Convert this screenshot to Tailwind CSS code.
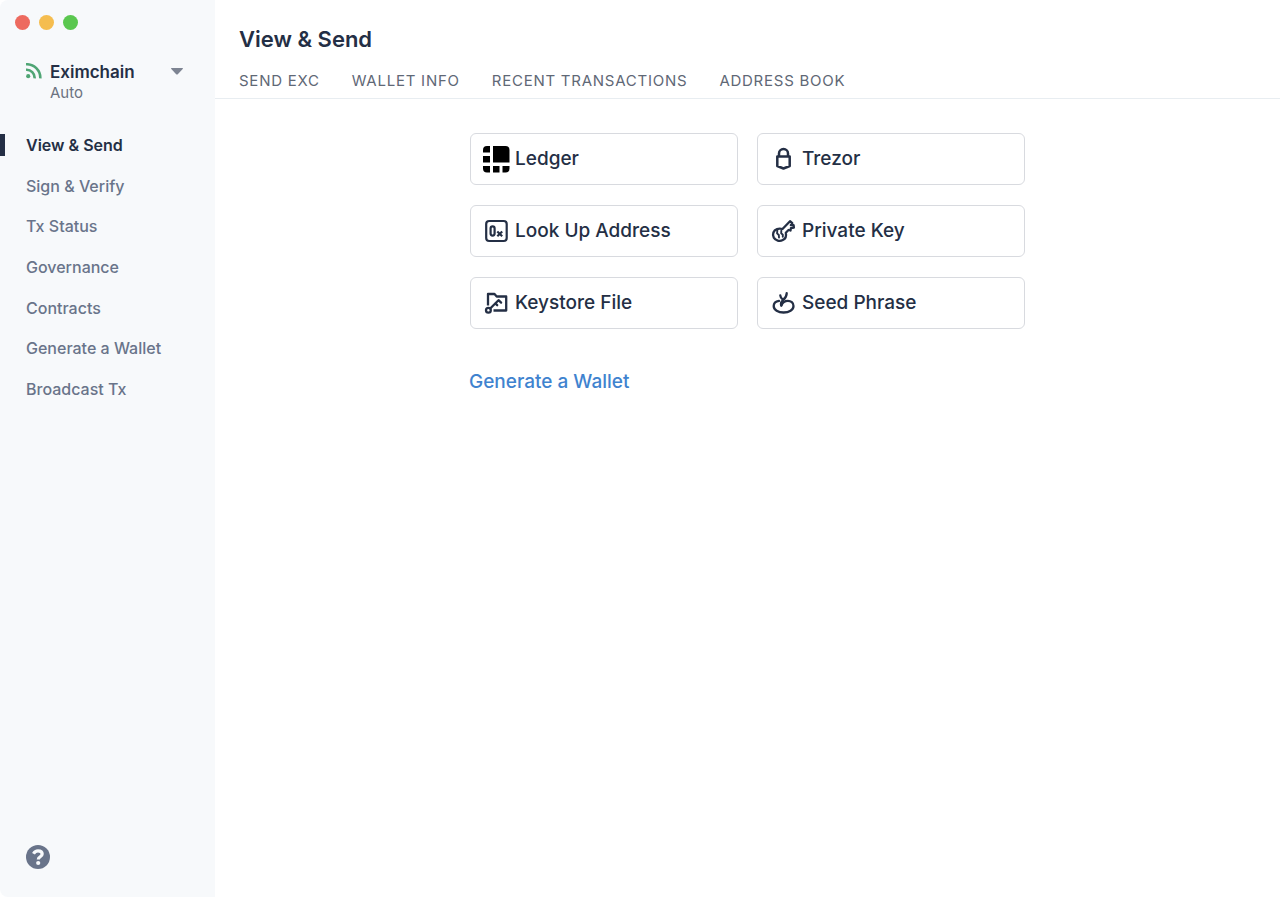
<!DOCTYPE html>
<html lang="en">
<head>
<meta charset="utf-8">
<meta name="viewport" content="width=device-width, initial-scale=1">
<title>View &amp; Send</title>
<script src="https://cdn.jsdelivr.net/npm/@tailwindcss/browser@4"></script>
</head>
<body class="flex min-h-screen bg-white font-['Inter',sans-serif] text-[#242f45]">
<aside class="flex w-[215px] shrink-0 flex-col rounded-l-lg bg-[#f7f9fb]">
  <div class="flex gap-[9px] pt-[15px] pl-[15px]">
    <button aria-label="Close" class="size-[15px] rounded-full bg-[#ed6a5f]"></button>
    <button aria-label="Minimize" class="size-[15px] rounded-full bg-[#f5bd4f]"></button>
    <button aria-label="Zoom" class="size-[15px] rounded-full bg-[#5ac74f]"></button>
  </div>
  <button class="mt-[30px] flex items-start pr-8 pl-[26px] text-left">
    <svg class="mt-[3px] size-4 shrink-0" viewBox="0 0 16 16" fill="none" stroke="#4fa574" stroke-width="2.6" aria-hidden="true"><circle cx="2.2" cy="13.2" r="2.1" fill="#4fa574" stroke="none"/><path d="M0 6.800A8 8 0 0 1 8.600 15.400M0 1.300A13.500 13.500 0 0 1 14.300 15.400"/></svg>
    <span class="ml-2 grow">
      <span class="block text-[17px] leading-6 font-semibold">Eximchain</span>
      <span class="block text-[15px] leading-[18px] text-[#6b7280]">Auto</span>
    </span>
    <svg class="mt-2 h-[7px] w-3" viewBox="0 0 12 7" aria-hidden="true"><path d="M.5 0h11q.8.3.2 1L6.8 6.2q-.8.7-1.6 0L.3 1q-.6-.7.2-1Z" fill="#7d8492"/></svg>
  </button>
  <nav class="mt-[32px] flex h-[266px] flex-col justify-between text-base leading-[22px] font-medium text-[#69748a]">
    <a href="#" aria-current="page" class="border-l-[5px] border-[#242f45] pl-[21px] font-semibold text-[#242f45]">View &amp; Send</a>
    <a href="#" class="pl-[26px]">Sign &amp; Verify</a>
    <a href="#" class="pl-[26px]">Tx Status</a>
    <a href="#" class="pl-[26px]">Governance</a>
    <a href="#" class="pl-[26px]">Contracts</a>
    <a href="#" class="pl-[26px]">Generate a Wallet</a>
    <a href="#" class="pl-[26px]">Broadcast Tx</a>
  </nav>
  <button aria-label="Help" class="mt-auto mb-7 ml-[26px] size-6">
    <svg viewBox="0 0 24 24" class="size-6" aria-hidden="true"><circle cx="12" cy="12" r="12" fill="#69748a"/><path d="M7.500 8.800C8.600 6.800 10.100 5.900 12 5.900c2.400 0 4.200 1.200 4.200 3.200 0 2.800-3.900 2.500-3.900 5.300" fill="none" stroke="#f7f9fb" stroke-width="3.200"/><circle cx="12.200" cy="18" r="2.100" fill="#f7f9fb"/></svg>
  </button>
</aside>
<main class="min-w-0 grow">
  <header class="border-b border-[#e8edf1] px-6 pt-6">
    <h1 class="text-[22px] leading-[30px] font-semibold">View &amp; Send</h1>
    <nav class="mt-4 flex gap-8 pb-[6px] text-[15px] leading-[22px] tracking-wider text-[#5f6876] uppercase">
      <a href="#">Send EXC</a>
      <a href="#">Wallet Info</a>
      <a href="#">Recent Transactions</a>
      <a href="#">Address Book</a>
    </nav>
  </header>
  <section class="mx-auto max-w-[555px] pt-[34px]">
    <div class="grid grid-cols-2 gap-x-[19px] gap-y-5 text-[19px] font-medium">
      <button class="flex h-[52px] items-center gap-[5px] rounded-md border border-[#d8dadf] pt-px pl-[11px]">
        <svg class="-mt-px size-7" viewBox="0 0 28 28" aria-hidden="true"><path d="M11 1H23.500Q27.500 1 27.500 5V17.500H11ZM5 1H8V7.500H1V5Q1 1 5 1ZM1 11H8V17.500H1ZM1 21H8V27.500H5Q1 27.500 1 23.500ZM11 21H17.500V27.500H11ZM20.500 21H27.500V23.500Q27.500 27.500 23.500 27.500H20.500Z"/></svg>Ledger
      </button>
      <button class="flex h-[52px] items-center gap-[5px] rounded-md border border-[#d8dadf] pt-px pl-[11px]">
        <svg class="-mt-px size-7" viewBox="0 0 28 28" fill="none" stroke="#242f45" stroke-width="2.500" stroke-linejoin="round" aria-hidden="true"><path d="M10 11V8.500a4.500 4.500 0 0 1 9 0V11M8.300 11.500h12.400v9.500L14.500 23.500 8.300 21Z"/></svg>Trezor
      </button>
      <button class="flex h-[52px] items-center gap-[5px] rounded-md border border-[#d8dadf] pt-px pl-[11px]">
        <svg class="-mt-px size-7" viewBox="0 0 28 28" fill="none" stroke="#242f45" stroke-width="2.200" aria-hidden="true"><rect x="4.200" y="4" width="20.500" height="20" rx="3"/><rect x="8.600" y="9.400" width="4" height="9.200" rx="2"/><path d="m15.300 14.500 4.900 4.700m0-4.700-4.900 4.700"/></svg>Look Up Address
      </button>
      <button class="flex h-[52px] items-center gap-[5px] rounded-md border border-[#d8dadf] pt-px pl-[11px]">
        <svg class="-mt-px size-7" viewBox="0 0 28 28" fill="none" stroke="#242f45" stroke-width="2.300" stroke-linecap="round" stroke-linejoin="round" aria-hidden="true"><path d="M13.500 12 21 4.200l2.300 1.900-1.500 2 2.800 0 .3 2.600-3 .5-.4 2.300-2-.5-2.700 2.700c.7 3-.3 6-3 7.400-3.200 1.600-7.300.5-9-2.500-1.800-3.400-.3-7.300 3.200-8.500 1.800-.6 3.700-.5 5.500-.1Z"/><path d="m8.300 13.300-.2 3 1.700 1.700.2 2.500M12.300 13.800l-.1 2.500 1.600 1.400v2" stroke-width="1.900"/></svg>Private Key
      </button>
      <button class="flex h-[52px] items-center gap-[5px] rounded-md border border-[#d8dadf] pt-px pl-[11px]">
        <svg class="-mt-px size-7" viewBox="0 0 28 28" fill="none" stroke="#242f45" stroke-width="2.300" stroke-linejoin="round" aria-hidden="true"><path d="M6 16.500V5h6.500l2.200 2.500h9.500V21.500H11.500"/><circle cx="6.400" cy="21.300" r="2.400"/><path d="m8.200 19.500 8.300-8.300 2.600 2.400M13.300 14.400l1.900 1.800" stroke-linecap="round"/></svg>Keystore File
      </button>
      <button class="flex h-[52px] items-center gap-[5px] rounded-md border border-[#d8dadf] pt-px pl-[11px]">
        <svg class="-mt-px size-7" viewBox="0 0 28 28" fill="none" stroke="#242f45" stroke-width="2.300" stroke-linecap="round" stroke-linejoin="round" aria-hidden="true"><path d="M10 11.800C6.700 12.300 4.700 14.100 4.700 17c0 3.900 4.500 6.500 9.900 6.500s9.900-2.600 9.900-6.500c0-3.300-2.600-5.200-5.600-5.200-3.400 0-5.400 1.600-6.600 4.700"/><path d="M12.300 16.500c-1-2.200 0-3.700 1.700-5.300 2.200-2 3.800-3.700 3.700-7M11.300 6.500c.1 1.800.8 3 2.700 4.300"/></svg>Seed Phrase
      </button>
    </div>
    <a href="#" class="mt-[39px] -ml-px inline-block text-[19px] leading-7 font-medium text-[#3f83cf]">Generate a Wallet</a>
  </section>
</main>
</body>
</html>
